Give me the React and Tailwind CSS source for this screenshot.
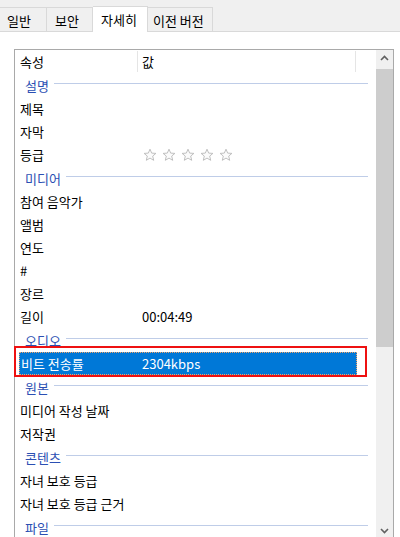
import React from "react";

const font = { fontFamily: '"Noto Sans CJK KR", "Noto Sans", sans-serif' };

function Star() {
  return (
    <svg width="14" height="14" viewBox="0 0 14 14">
      <path
        d="M7 1.2 L8.7 5.1 L12.9 5.4 L9.7 8.1 L10.7 12.3 L7 10.1 L3.3 12.3 L4.3 8.1 L1.1 5.4 L5.3 5.1 Z"
        fill="#fbfbfb"
        stroke="#b9b9b9"
        strokeWidth="0.9"
        strokeLinejoin="round"
      />
    </svg>
  );
}

function Group({ label }) {
  return (
    <div className="flex h-[24px] items-center pl-[10px] pr-[8px]">
      <span className="text-[13px] leading-none text-[#2b4fb3]">{label}</span>
      <div className="ml-[5px] mb-[3px] h-px flex-1 bg-[#bfcde8]" />
    </div>
  );
}

function Item({ label, value, children }) {
  return (
    <div className="flex h-[23px] items-center text-[13px] leading-none text-black">
      <div className="w-[127px] pl-[5px] whitespace-nowrap">{label}</div>
      <div className="flex-1 whitespace-nowrap">{value}{children}</div>
    </div>
  );
}

function Selected({ label, value }) {
  return (
    <div className="flex h-[23px] items-stretch pl-[4px] pr-[19px]">
      <div className="flex flex-1 items-center border border-dotted border-[#f1a56a] bg-[#0078d7] text-[13px] leading-none text-white">
        <div className="w-[122px] pl-[1px] whitespace-nowrap">{label}</div>
        <div className="flex-1 whitespace-nowrap">{value}</div>
      </div>
    </div>
  );
}

export default function App() {
  return (
    <div className="relative h-[537px] w-[400px] overflow-hidden bg-white" style={font}>
      {/* Tabs */}
      <div className="flex h-[32px] items-end border-b border-[#d9d9d9] bg-[#f0f0f0] text-[13px] leading-none text-black">
        <div className="flex h-[24px] w-[47px] items-center border-t border-r border-[#d9d9d9] pl-[7px] pt-[2px]">일반</div>
        <div className="flex h-[24px] w-[46px] items-center border-t border-r border-[#d9d9d9] pl-[8px] pt-[2px]">보안</div>
        <div className="-mb-px flex h-[26px] w-[55px] items-center border-t border-r border-[#d9d9d9] bg-white pl-[8px] pb-[1px]">자세히</div>
        <div className="flex h-[24px] w-[65px] items-center border-t border-r border-[#d9d9d9] pl-[5px] pt-[2px] whitespace-nowrap">이전 버전</div>
      </div>

      {/* List box */}
      <div className="ml-[14px] mt-[17px] flex h-[491px] w-[380px] border border-[#a9a9a9]">
        <div className="flex flex-1 flex-col">
          {/* header */}
          <div className="flex h-[23px] items-center text-[13px] leading-none text-black">
            <div className="w-[122px] pl-[5px]">속성</div>
            <div className="h-[21px] w-px bg-[#e5e5e5]" />
            <div className="w-[217px] pl-[4px]">값</div>
            <div className="h-[21px] w-px bg-[#e5e5e5]" />
          </div>
          <Group label="설명" />
          <Item label="제목" />
          <Item label="자막" />
          <Item label="등급">
            <div className="flex gap-[5px] pl-[1px]">
              <Star /><Star /><Star /><Star /><Star />
            </div>
          </Item>
          <Group label="미디어" />
          <Item label="참여 음악가" />
          <Item label="앨범" />
          <Item label="연도" />
          <Item label="#" />
          <Item label="장르" />
          <Item label="길이" value="00:04:49" />
          <Group label="오디오" />
          <Selected label="비트 전송률" value="2304kbps" />
          <Group label="원본" />
          <Item label="미디어 작성 날짜" />
          <Item label="저작권" />
          <Group label="콘텐츠" />
          <Item label="자녀 보호 등급" />
          <Item label="자녀 보호 등급 근거" />
          <Group label="파일" />
        </div>

        {/* Scrollbar */}
        <div className="flex w-[17px] flex-col bg-[#f0f0f0]">
          <div className="flex h-[19px] items-center justify-center pb-[4px]">
            <svg width="9" height="6" viewBox="0 0 9 6">
              <path d="M1 5 L4.5 1.5 L8 5" fill="none" stroke="#606060" strokeWidth="1.6" />
            </svg>
          </div>
          <div className="h-[278px] bg-[#cdcdcd]" />
          <div className="flex-1" />
          <div className="flex h-[17px] items-center justify-center">
            <svg width="9" height="6" viewBox="0 0 9 6">
              <path d="M1 1 L4.5 4.5 L8 1" fill="none" stroke="#606060" strokeWidth="1.6" />
            </svg>
          </div>
        </div>
      </div>

      {/* Red annotation box */}
      <div className="absolute left-[14px] top-[346px] h-[31px] w-[353px] border-2 border-[#ee1111]" />
    </div>
  );
}
